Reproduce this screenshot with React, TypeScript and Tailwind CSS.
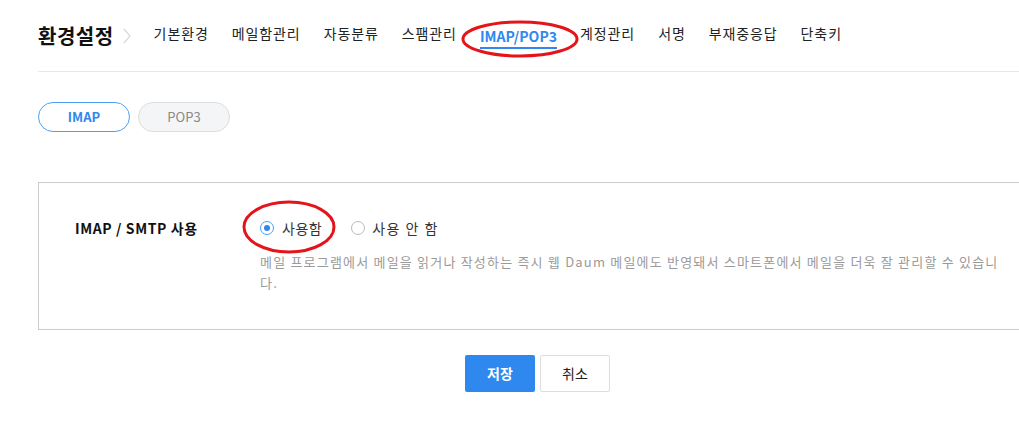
import React from "react";

const font = { fontFamily: '"Noto Sans CJK KR", "Noto Sans", sans-serif' };

export default function App() {
  const nav = ["기본환경", "메일함관리", "자동분류", "스팸관리", "IMAP/POP3", "계정관리", "서명", "부재중응답", "단축키"];
  return (
    <div className="relative w-[1019px] h-[434px] overflow-hidden bg-white text-[#222]" style={font}>
      <div className="w-[1080px] pl-[38px]">
        <div className="flex items-center h-[72px] border-b border-[#e8e8e8]">
          <h1 className="text-[20px] font-bold tracking-[0.5px] text-[#111] leading-none">환경설정</h1>
          <svg width="10" height="18" viewBox="0 0 10 18" className="ml-[8px] mr-[22px]">
            <path d="M2 2 L8 9 L2 16" fill="none" stroke="#d8d8d8" strokeWidth="1.2" />
          </svg>
          <nav className="flex gap-[23px] text-[14px] leading-none">
            {nav.map((n) =>
              n === "IMAP/POP3" ? (
                <span key={n} className="relative text-[#2f88ee] font-semibold pb-[4px] border-b-2 border-[#2f88ee] translate-y-[3px]">
                  {n}
                </span>
              ) : (
                <span key={n} className="text-[#222] tracking-[0.9px]">{n}</span>
              )
            )}
          </nav>
        </div>

        <div className="flex gap-[8px] mt-[30px]">
          <button className="w-[92px] h-[30px] rounded-full border border-[#4a9ff5] text-[#2f88ee] text-[13px] font-bold bg-white">IMAP</button>
          <button className="w-[92px] h-[30px] rounded-full border border-[#dcdcdc] text-[#888] text-[13px] bg-[#f4f5f7]">POP3</button>
        </div>

        <div className="mt-[50px] h-[148px] border border-[#cccccc] flex pt-[35px]">
          <div className="w-[221px] pl-[36px] text-[14px] font-bold text-[#111] leading-[20px] tracking-[0.6px]">IMAP / SMTP 사용</div>
          <div>
            <div className="flex items-center h-[20px] text-[14px] text-[#333]">
              <span className="w-[14px] h-[14px] rounded-full border border-[#4a9ff5] flex items-center justify-center">
                <span className="w-[6px] h-[6px] rounded-full bg-[#2f88ee]" />
              </span>
              <span className="ml-[8px] tracking-[0.5px]">사용함</span>
              <span className="ml-[29px] w-[14px] h-[14px] rounded-full border border-[#bbb]" />
              <span className="ml-[7px] tracking-[1.5px]">사용 안 함</span>
            </div>
            <p className="mt-[13px] text-[13px] leading-[21px] text-[#9a9a9a] tracking-[1.2px]">
              메일 프로그램에서 메일을 읽거나 작성하는 즉시 웹 Daum 메일에도 반영돼서 스마트폰에서 메일을 더욱 잘 관리할 수 있습니
              <br />다.
            </p>
          </div>
        </div>

        <div className="flex justify-center gap-[5px] mt-[25px] w-[981px] pl-[18px]">
          <button className="w-[70px] h-[37px] rounded-[2px] bg-[#2f88ee] text-white text-[14px] font-bold">저장</button>
          <button className="w-[70px] h-[37px] rounded-[2px] border border-[#dddddd] bg-white text-[#222] text-[14px]">취소</button>
        </div>
      </div>

      <svg className="absolute left-0 top-0 pointer-events-none" width="1019" height="434">
        <ellipse cx="520" cy="39" rx="57" ry="17" fill="none" stroke="#e5141a" strokeWidth="3" />
        <ellipse cx="289" cy="227" rx="45" ry="25" fill="none" stroke="#e5141a" strokeWidth="3" />
      </svg>
    </div>
  );
}
